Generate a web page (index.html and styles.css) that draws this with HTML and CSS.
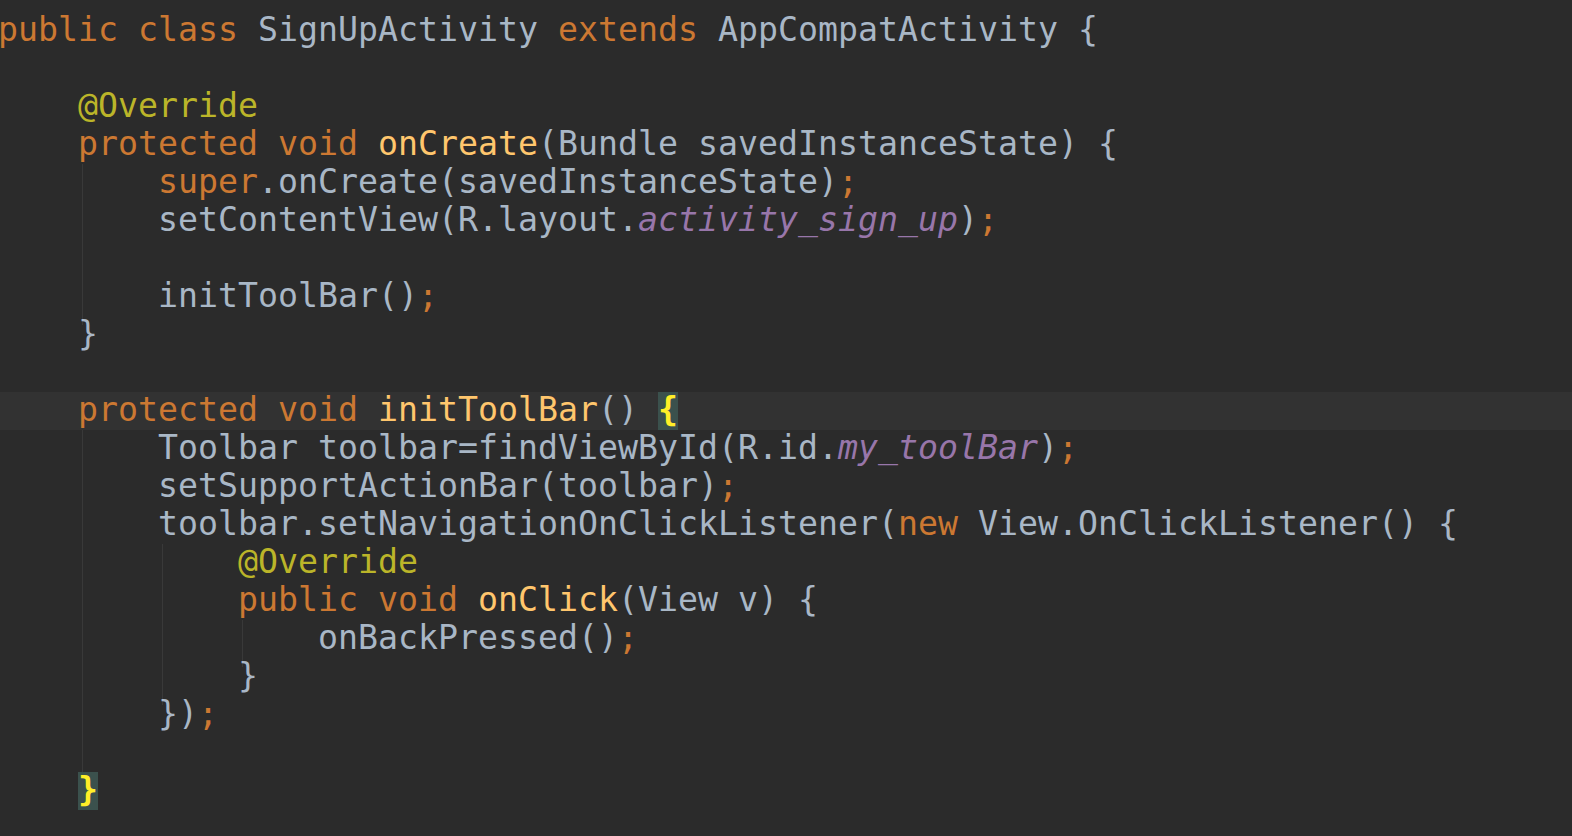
FILE: index.html
```html
<html>
  <head>
    <title>SignUpActivity.java</title>
    <link rel="stylesheet" href="styles.css">
  </head>
  <body>
    <div class="code">
      <div class="line"><span class="kw">public class</span> SignUpActivity <span class="kw">extends</span> AppCompatActivity {</div>
      <div class="line"></div>
      <div class="line">    <span class="ann">@Override</span></div>
      <div class="line">    <span class="kw">protected void</span> <span class="fn">onCreate</span>(Bundle savedInstanceState) {</div>
      <div class="block lvl1">
        <div class="line">        <span class="kw">super</span>.onCreate(savedInstanceState)<span class="kw">;</span></div>
        <div class="line">        setContentView(R.layout.<span class="fld">activity<span class="us">_</span>sign<span class="us">_</span>up</span>)<span class="kw">;</span></div>
        <div class="line"></div>
        <div class="line">        initToolBar()<span class="kw">;</span></div>
      </div>
      <div class="line">    }</div>
      <div class="line"></div>
      <div class="line current">    <span class="kw">protected void</span> <span class="fn">initToolBar</span>() <span class="match">{</span></div>
      <div class="block lvl1">
        <div class="line">        Toolbar toolbar=findViewById(R.id.<span class="fld">my<span class="us">_</span>toolBar</span>)<span class="kw">;</span></div>
        <div class="line">        setSupportActionBar(toolbar)<span class="kw">;</span></div>
        <div class="line">        toolbar.setNavigationOnClickListener(<span class="kw">new</span> View.OnClickListener() {</div>
        <div class="block lvl2">
          <div class="line">            <span class="ann">@Override</span></div>
          <div class="line">            <span class="kw">public void</span> <span class="fn">onClick</span>(View v) {</div>
          <div class="block lvl3">
            <div class="line">                onBackPressed()<span class="kw">;</span></div>
          </div>
          <div class="line">            }</div>
        </div>
        <div class="line">        })<span class="kw">;</span></div>
        <div class="line"></div>
      </div>
      <div class="line">    <span class="match">}</span></div>
    </div>
  </body>
</html>
```

FILE: styles.css
```css
body {
    margin: 0;
    padding: 0;
    background-color: #2b2b2b;
    overflow: hidden;
}

.code {
    margin-left: -2px;
    padding-top: 12px;
    font-family: "DejaVu Sans Mono", monospace;
    font-size: 33.22px;
    color: #a9b7c6;
}

.line {
    height: 38px;
    line-height: 36px;
    white-space: pre;
}

.current {
    background-color: #323232;
}

/* indent guides */
.block {
    position: relative;
}

.block::before {
    content: "";
    position: absolute;
    top: 0;
    bottom: -9px;
    width: 1px;
    background-color: #393939;
    z-index: -1;
}

.lvl1::before {
    left: 84px;
}

.lvl2::before {
    left: 164px;
}

.lvl3::before {
    left: 244px;
}

.kw {
    color: #cc7832;
}

.fn {
    color: #ffc66d;
}

.ann {
    color: #bbb529;
}

.fld {
    color: #9876aa;
    font-style: italic;
}

/* dejavu's underscore sits too low, lift it a bit */
.us {
    position: relative;
    top: -2px;
}

.match {
    display: inline-block;
    height: 38px;
    vertical-align: top;
    color: #ffef28;
    font-weight: bold;
    background-color: #3b514d;
}
```
